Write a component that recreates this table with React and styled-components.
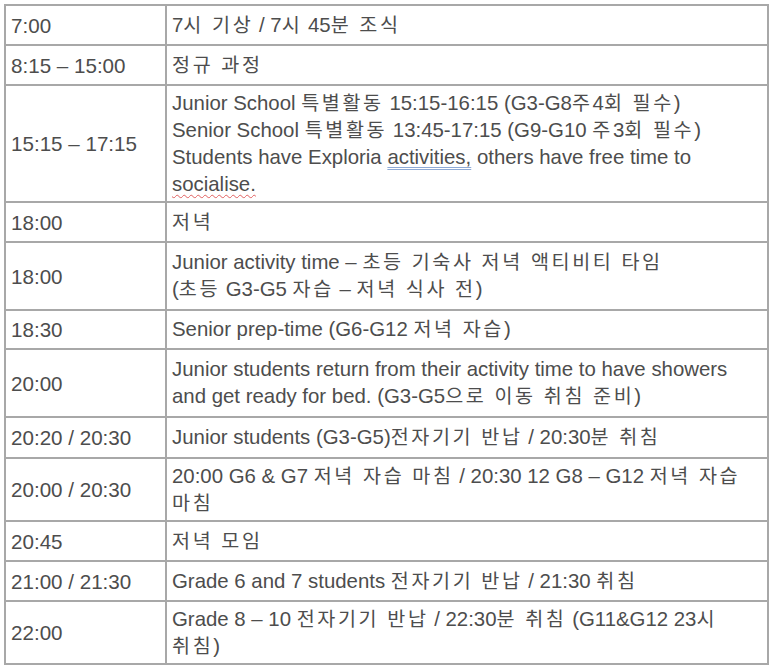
import React from "react";
import styled, { createGlobalStyle } from "styled-components";

const GlobalStyle = createGlobalStyle`
  body {
    margin: 0;
    background: #ffffff;
    font-family: "Liberation Sans", "Noto Sans CJK KR", sans-serif;
  }
`;

const Page = styled.div`
  padding: 4px 0 0 4px;
`;

const Table = styled.table`
  width: 765px;
  border-collapse: collapse;
  table-layout: fixed;
  border: 2px solid #a8a8a8;
`;

const Row = styled.tr`
  height: ${(p) => p.$h}px;
`;

const TimeCell = styled.td`
  width: 149px;
  padding: 0 5px;
  border: 2px solid #a8a8a8;
  vertical-align: middle;
  color: #4d4d4d;
  font-size: 20.6px;
  line-height: 27px;
  white-space: nowrap;
`;

const TextCell = styled.td`
  padding: 0 5px;
  border: 2px solid #a8a8a8;
  vertical-align: middle;
  color: #4d4d4d;
  font-size: 20.4px;
  line-height: 27px;
`;

const Line = styled.div`
  white-space: nowrap;
`;

// hangul runs are set a little looser, like the original Korean font
const Ko = styled.span`
  letter-spacing: 2.6px;
  font-size: 19.6px;
`;

const Grammar = styled.span`
  text-decoration: underline double #8eaad6;
  text-decoration-thickness: 1px;
  text-underline-offset: 3px;
`;

const Spelling = styled.span`
  text-decoration: underline wavy #e06060;
  text-decoration-thickness: 1px;
  text-underline-offset: 3px;
`;

const withKo = (text) =>
  typeof text !== "string"
    ? text
    : text.split(/([가-힣]+(?: [가-힣]+)*)/).map((part, i) =>
        /[가-힣]/.test(part) ? <Ko key={i}>{part}</Ko> : part
      );

const rows = [
  { time: "7:00", h: 40, lines: ["7시 기상 / 7시 45분 조식"] },
  { time: "8:15 – 15:00", h: 40, lines: ["정규 과정"] },
  {
    time: "15:15 – 17:15",
    h: 117,
    lines: [
      "Junior School 특별활동 15:15-16:15 (G3-G8주4회 필수)",
      "Senior School 특별활동 13:45-17:15 (G9-G10 주3회 필수)",
      <>
        Students have Exploria <Grammar>activities,</Grammar> others have free time to
      </>,
      <Spelling>socialise.</Spelling>,
    ],
  },
  { time: "18:00", h: 40, lines: ["저녁"] },
  {
    time: "18:00",
    h: 68,
    lines: ["Junior activity time – 초등 기숙사 저녁 액티비티 타임", "(초등 G3-G5 자습 – 저녁 식사 전)"],
  },
  { time: "18:30", h: 39, lines: ["Senior prep-time (G6-G12 저녁 자습)"] },
  {
    time: "20:00",
    h: 68,
    lines: [
      "Junior students return from their activity time to have showers",
      "and get ready for bed. (G3-G5으로 이동 취침 준비)",
    ],
  },
  { time: "20:20 / 20:30", h: 41, lines: ["Junior students (G3-G5)전자기기 반납 / 20:30분 취침"] },
  {
    time: "20:00 / 20:30",
    h: 63,
    lines: ["20:00 G6 & G7 저녁 자습 마침 / 20:30 12 G8 – G12 저녁 자습", "마침"],
  },
  { time: "20:45", h: 40, lines: ["저녁 모임"] },
  { time: "21:00 / 21:30", h: 40, lines: ["Grade 6 and 7 students 전자기기 반납 / 21:30 취침"] },
  {
    time: "22:00",
    h: 63,
    lines: ["Grade 8 – 10 전자기기 반납 / 22:30분 취침 (G11&G12 23시", "취침)"],
  },
];

export default function App() {
  return (
    <>
      <GlobalStyle />
      <Page>
        <Table>
          <tbody>
            {rows.map((r, i) => (
              <Row key={i} $h={r.h}>
                <TimeCell>{r.time}</TimeCell>
                <TextCell>
                  {r.lines.map((l, j) => (
                    <Line key={j}>{withKo(l)}</Line>
                  ))}
                </TextCell>
              </Row>
            ))}
          </tbody>
        </Table>
      </Page>
    </>
  );
}
